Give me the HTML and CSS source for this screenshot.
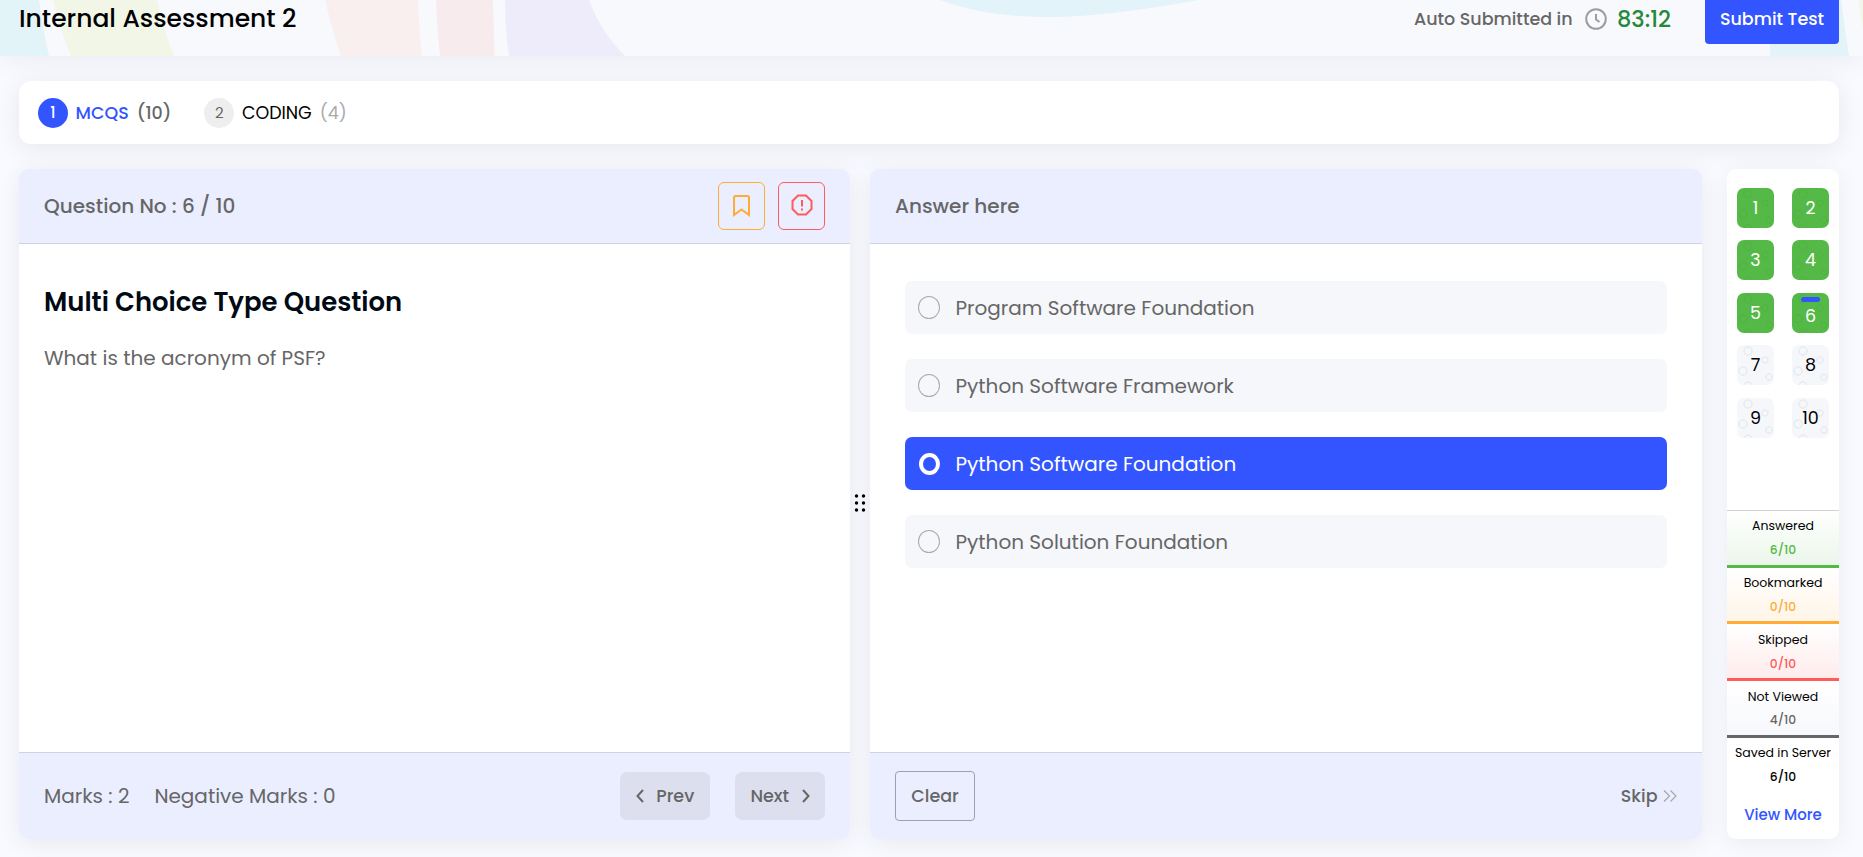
FILE: index.html
```html
<!DOCTYPE html>
<html lang="en">
<head>
<meta charset="utf-8">
<title>Internal Assessment 2</title>
<link rel="stylesheet" href="styles.css">
</head>
<body>
<header class="topbar">
  <svg class="topbar-art" width="1863" height="56" viewBox="0 0 1863 56">
    <path d="M0 0H39Q43 30 49 56H0Z" fill="#e2f4f7"/>
    <path d="M53 0H157Q164 32 174 56H71Q60 30 53 0Z" fill="#f2f6e7"/>
    <path d="M325 0H418Q419 30 422 56H341Q332 30 325 0Z" fill="#f9efef"/>
    <path d="M436 0H493L494.500 56H440Q437 30 436 0Z" fill="#f8ebee"/>
    <path d="M505 0H589Q601 32 625 56H509Q505 30 505 0Z" fill="#eeecfa"/>
    <path d="M940 0Q985 17 1050 17Q1105 17 1199 0Z" fill="#e3f3fa"/>
    <path d="M1770 0H1841L1849 56H1770Z" fill="#e2f4f7"/>
    <path d="M1858 0H1863V28Z" fill="#f2f6e7"/>
  </svg>
  <h1 class="title">Internal Assessment 2</h1>
  <div class="timer">
    <span class="timer-label">Auto Submitted in</span>
    <svg class="clock" width="22" height="22" viewBox="0 0 22 22" fill="none" stroke="#9a9da1" stroke-width="2"><circle cx="11" cy="11" r="9.800"/><path d="M11 6V11.500L14.500 14"/></svg>
    <span class="time">83:12</span>
  </div>
  <button class="submit"><span>Submit Test</span></button>
</header>
<main class="page">
  <nav class="tabs">
    <div class="tab tab-active"><span class="num">1</span><span class="tab-name">MCQS</span><span class="count">(10)</span></div>
    <div class="tab"><span class="num">2</span><span class="tab-name">CODING</span><span class="count">(4)</span></div>
  </nav>
  <div class="workspace">
    <section class="panel">
      <div class="panel-head">
        <span class="head-text">Question No : 6 / 10</span>
        <div class="head-actions">
          <button class="icon-btn mark"><svg width="19" height="23" viewBox="0 0 19 23" fill="none" stroke="#ffab35" stroke-width="2"><path d="M2 21V3.500Q2 2 3.500 2H15.500Q17 2 17 3.500V21L9.500 15.500Z"/></svg></button>
          <button class="icon-btn alert"><svg width="22" height="22" viewBox="0 0 22 22" fill="none" stroke="#ff5b5b" stroke-width="2"><path d="M7 1.500H15L20.500 7V15L15 20.500H7L1.500 15V7Z"/><path d="M11 6V12.500M11 14.500V16.500"/></svg></button>
        </div>
      </div>
      <div class="panel-body question">
        <h2 class="q-title">Multi Choice Type Question</h2>
        <p class="q-text">What is the acronym of PSF?</p>
      </div>
      <div class="panel-foot">
        <div class="marks"><span>Marks : 2</span><span>Negative Marks : 0</span></div>
        <div class="pager">
          <button class="page-btn"><svg width="8" height="14" viewBox="0 0 8 14" fill="none" stroke="#666" stroke-width="2"><path d="M7 1L1.500 7L7 13"/></svg><span>Prev</span></button>
          <button class="page-btn"><span>Next</span><svg width="8" height="14" viewBox="0 0 8 14" fill="none" stroke="#666" stroke-width="2"><path d="M1 1L6.500 7L1 13"/></svg></button>
        </div>
      </div>
    </section>
    <div class="splitter"><svg width="12" height="18" viewBox="0 0 12 18"><circle cx="2.500" cy="2" r="1.700"/><circle cx="9.500" cy="2" r="1.700"/><circle cx="2.500" cy="9" r="1.700"/><circle cx="9.500" cy="9" r="1.700"/><circle cx="2.500" cy="16" r="1.700"/><circle cx="9.500" cy="16" r="1.700"/></svg></div>
    <section class="panel">
      <div class="panel-head"><span class="head-text">Answer here</span></div>
      <div class="panel-body options">
        <div class="option"><i class="radio"></i><span>Program Software Foundation</span></div>
        <div class="option"><i class="radio"></i><span>Python Software Framework</span></div>
        <div class="option chosen"><i class="radio"></i><span>Python Software Foundation</span></div>
        <div class="option"><i class="radio"></i><span>Python Solution Foundation</span></div>
      </div>
      <div class="panel-foot">
        <button class="clear"><span>Clear</span></button>
        <div class="skip"><span>Skip</span><svg width="14" height="12" viewBox="0 0 14 12" fill="none" stroke="#a5a7ad" stroke-width="1.200"><path d="M1 .5L6.500 6L1 11.500M7.500 .5L13 6L7.500 11.500"/></svg></div>
      </div>
    </section>
    <aside class="side">
      <div class="tiles">
        <span class="tile done">1</span><span class="tile done">2</span>
        <span class="tile done">3</span><span class="tile done">4</span>
        <span class="tile done">5</span><span class="tile done current">6</span>
        <span class="tile">7</span><span class="tile">8</span>
        <span class="tile">9</span><span class="tile">10</span>
      </div>
      <div class="stats">
        <div class="stat answered"><span>Answered</span><b>6/10</b></div>
        <div class="stat bookmarked"><span>Bookmarked</span><b>0/10</b></div>
        <div class="stat skipped"><span>Skipped</span><b>0/10</b></div>
        <div class="stat unseen"><span>Not Viewed</span><b>4/10</b></div>
        <div class="stat saved"><span>Saved in Server</span><b>6/10</b></div>
        <a class="more">View More</a>
      </div>
    </aside>
  </div>
</main>
</body>
</html>
```
FILE: styles.css
```css
* { box-sizing: border-box; }
body {
  margin: 0;
  width: 1863px;
  height: 857px;
  overflow: hidden;
  background: #f8faff;
  font-family: Poppins, Inter, "Open Sans", sans-serif;
  color: #666;
}
h1, h2, p { margin: 0; }
button { font: inherit; color: inherit; border: 0; padding: 0; }
span, a, h1, h2, p, b { white-space: nowrap; }

.topbar {
  position: relative;
  height: 56px;
  display: flex;
  align-items: flex-start;
  padding: 0 24px 0 19px;
  background: #f8f9fd;
  box-shadow: 0 4px 28px rgba(0, 0, 0, 0.06);
}
.topbar-art { position: absolute; left: 0; top: 0; }
.topbar > :not(.topbar-art) { position: relative; }
.title { flex: 1; line-height: 37px; font-size: 25px; font-weight: 500; color: #000; }
.timer { display: flex; align-items: center; height: 38px; }
.timer-label { width: 171px; font-size: 17.5px; font-weight: 500; }
.clock { margin-right: 10px; }
.time { width: 88px; font-size: 22.500px; font-weight: 500; color: #25883b; }
.submit {
  width: 134px;
  height: 50px;
  margin-top: -6px;
  border-radius: 4px;
  background: #3355ff;
  color: #fff;
  font-size: 17.5px;
  font-weight: 500;
}

.page { padding: 25px 24px 18px 19px; }
.tabs {
  height: 63px;
  display: flex;
  align-items: center;
  gap: 33px;
  padding-left: 19px;
  border-radius: 12px;
  background: #fff;
  position: relative;
  box-shadow: 0 4px 26px rgba(0, 0, 0, 0.08);
}
.tab { display: flex; align-items: center; font-size: 17.5px; color: #000; }
.num {
  width: 30px;
  height: 30px;
  margin-right: 7.5px;
  border-radius: 50%;
  background: #eee;
  color: #666;
  font-size: 15px;
  line-height: 30px;
  text-align: center;
}
.tab-active .num { background: #3355ff; color: #fff; font-weight: 500; }
.tab-active .tab-name { color: #3355ff; font-weight: 500; }
.count { margin-left: 8px; color: #aaa; }
.tab-active .count { color: #666; font-weight: 500; }

.workspace { display: flex; height: 670px; margin-top: 25px; }
.panel {
  flex: 0 0 auto;
  width: 831px;
  display: flex;
  flex-direction: column;
  border-radius: 9px;
  background: #fff;
  box-shadow: 0 4px 24px rgba(0, 0, 0, 0.07);
}
.splitter + .panel { width: 832px; }
.panel-head {
  height: 75px;
  display: flex;
  align-items: center;
  justify-content: space-between;
  padding: 0 25px;
  border-bottom: 1px solid #d0d2dd;
  border-radius: 9px 9px 0 0;
  background: #eaeeff;
}
.head-text { font-size: 20px; font-weight: 500; }
.head-actions { display: flex; gap: 13px; }
.icon-btn {
  width: 47px;
  height: 48px;
  display: flex;
  align-items: center;
  justify-content: center;
  border: 1px solid #ffab35;
  border-radius: 6px;
  background: transparent;
}
.icon-btn svg { margin-top: -3px; }
.mark svg { margin-top: -1px; }
.alert { border-color: #ff5b5b; }
.panel-body { flex: 1; }
.question { padding: 38px 25px; }
.q-title { line-height: 40px; font-size: 25.9px; font-weight: 600; color: #000a14; }
.q-text { margin-top: 21px; line-height: 30px; font-size: 20px; }
.panel-foot {
  height: 87px;
  display: flex;
  align-items: center;
  justify-content: space-between;
  padding: 0 25px;
  border-top: 1px solid #d0d2dd;
  border-radius: 0 0 9px 9px;
  background: #eaeeff;
}
.marks { display: flex; gap: 25px; font-size: 20px; }
.pager { display: flex; gap: 25px; }
.page-btn {
  width: 90px;
  height: 48px;
  display: flex;
  align-items: center;
  justify-content: center;
  gap: 12.5px;
  border-radius: 7px;
  background: #dddfee;
  font-size: 17.5px;
  font-weight: 500;
}
.splitter { width: 20px; display: flex; align-items: center; justify-content: center; }
.splitter svg { margin-bottom: 2px; }

.options { display: flex; flex-direction: column; gap: 25px; padding: 37px 35px; }
.option {
  height: 53px;
  display: flex;
  align-items: center;
  gap: 15.5px;
  padding-left: 13px;
  border-radius: 7px;
  background: #f5f7fb;
  font-size: 20px;
}
.radio { width: 22px; height: 23px; border: 1px solid #aaa; border-radius: 50%; }
.chosen { background: #3355ff; color: #fff; }
.chosen .radio { width: 21px; height: 22px; margin: 0 .5px; border: 4.500px solid #fff; }
.clear {
  width: 80px;
  height: 50px;
  border: 1px solid #a0a1a8;
  border-radius: 4px;
  background: transparent;
  font-size: 17.5px;
  font-weight: 500;
}
.skip { display: flex; align-items: center; gap: 5.5px; font-size: 17.5px; font-weight: 500; }

.side {
  width: 112px;
  margin-left: 25px;
  display: flex;
  flex-direction: column;
  justify-content: space-between;
  border-radius: 9px;
  background: #fff;
  box-shadow: 0 4px 24px rgba(0, 0, 0, 0.06);
}
.tiles {
  display: grid;
  grid-template-columns: 37px 37px;
  gap: 12.4px 18px;
  padding: 19px 10px 0;
}
.tile {
  --ring: #e9edf1;
  height: 40px;
  border-radius: 7px;
  background:
    radial-gradient(circle at 11px 6px, transparent 3px, var(--ring) 3.500px 4.500px, transparent 5px),
    radial-gradient(circle at 28px 15px, transparent 2px, var(--ring) 2.500px 3.500px, transparent 4px),
    radial-gradient(circle at 6px 26px, transparent 3px, var(--ring) 3.500px 4.500px, transparent 5px),
    radial-gradient(circle at 32px 32px, transparent 2px, var(--ring) 2.500px 3.500px, transparent 4px),
    radial-gradient(circle at 11px 41px, transparent 3px, var(--ring) 3.500px 4.500px, transparent 5px),
    #f5f7fb;
  color: #000;
  font-size: 17.5px;
  line-height: 40px;
  text-align: center;
}
.done { --ring: #51b443; background-color: #55b947; color: #fff; }
.current { position: relative; padding-top: 3px; }
.current::before {
  content: "";
  position: absolute;
  left: 9px;
  top: 4px;
  width: 19px;
  height: 5px;
  border-radius: 3px;
  background: #3355ff;
}
.stats { border-top: 1px solid #d0d2d8; font-size: 12.5px; text-align: center; }
.stat {
  height: 57px;
  padding-top: 3px;
  display: flex;
  flex-direction: column;
  align-items: center;
  line-height: 24px;
  color: #000;
  border-bottom: 3px solid;
}
.stat span { color: #000; }
.stat b { font-size: 12.3px; font-weight: 500; }
.answered { border-color: #55b947; background: linear-gradient(#fff, #ebf6ea); }
.answered b { color: #55b947; }
.bookmarked { height: 56px; border-color: #ffab35; background: linear-gradient(#fff, #fff5e8); }
.bookmarked b { color: #ffab35; }
.skipped { padding-top: 4px; border-color: #ff5b5b; background: linear-gradient(#fff, #ffecec); }
.skipped b { color: #ff5b5b; }
.unseen { padding-top: 4px; border-color: #666; background: linear-gradient(#fff, #f7f8fc); }
.unseen b { line-height: 22px; color: #666; }
.saved { border: 0; }
.more { display: block; height: 44px; padding-top: 8px; line-height: 24px; color: #3355ff; font-size: 15px; font-weight: 500; }
```
